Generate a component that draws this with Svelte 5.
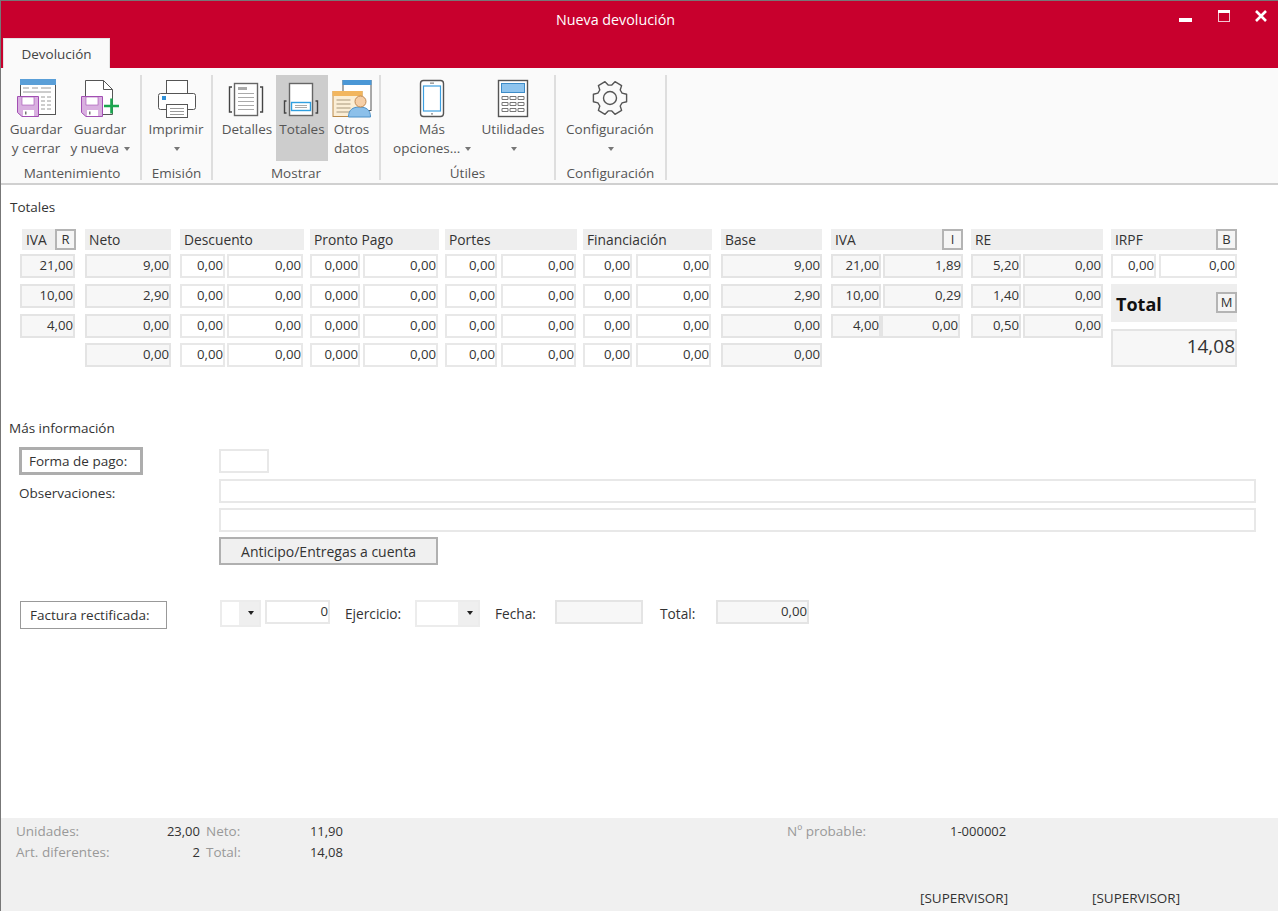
<script>
  const totalCols = [
    { key: 'iva', label: 'IVA', btn: 'R', ro: true, rows: [['21,00'], ['10,00'], ['4,00']] },
    { key: 'neto', label: 'Neto', ro: true, rows: [['9,00'], ['2,90'], ['0,00'], ['0,00']] },
    { key: 'desc', label: 'Descuento', rows: [['0,00', '0,00'], ['0,00', '0,00'], ['0,00', '0,00'], ['0,00', '0,00']] },
    { key: 'pronto', label: 'Pronto Pago', rows: [['0,000', '0,00'], ['0,000', '0,00'], ['0,000', '0,00'], ['0,000', '0,00']] },
    { key: 'portes', label: 'Portes', rows: [['0,00', '0,00'], ['0,00', '0,00'], ['0,00', '0,00'], ['0,00', '0,00']] },
    { key: 'fin', label: 'Financiación', rows: [['0,00', '0,00'], ['0,00', '0,00'], ['0,00', '0,00'], ['0,00', '0,00']] },
    { key: 'base', label: 'Base', ro: true, rows: [['9,00'], ['2,90'], ['0,00'], ['0,00']] },
    { key: 'iva2', label: 'IVA', btn: 'I', ro: true, rows: [['21,00', '1,89'], ['10,00', '0,29'], ['4,00', '0,00']] },
    { key: 're', label: 'RE', ro: true, rows: [['5,20', '0,00'], ['1,40', '0,00'], ['0,50', '0,00']] }
  ];

  // rueda dentada de seis dientes
  function gearPath(cx, cy) {
    const pts = [];
    for (let k = 0; k < 6; k++) {
      const a = k * 60;
      for (const [d, r] of [[-22, 13], [-13, 17], [13, 17], [22, 13]]) {
        const t = ((a + d) * Math.PI) / 180;
        pts.push((cx + r * Math.cos(t)).toFixed(1) + ' ' + (cy + r * Math.sin(t)).toFixed(1));
      }
    }
    return 'M' + pts.join('L') + 'Z';
  }
</script>

<div class="window">
  <header class="head">
    <div class="titlebar">
      <div class="title">Nueva devolución</div>
      <div class="controls">
        <svg width="108" height="37" viewBox="0 0 108 37">
          <rect x="9" y="17" width="13" height="4" fill="#fff" />
          <rect x="48.5" y="9.5" width="11" height="11" fill="none" stroke="#f3c6d2" />
          <rect x="48" y="9" width="12" height="3" fill="#fff" />
          <path d="M86 10l10 10M96 10l-10 10" stroke="#fff" stroke-width="2.6" />
        </svg>
      </div>
    </div>
    <div class="tabs">
      <div class="tab">Devolución</div>
    </div>
  </header>

  <nav class="ribbon">
    <section class="group g-mant">
      <div class="btns">
        <div class="rb w64">
          <svg width="44" height="42" viewBox="0 0 44 42">
            <rect x="6.5" y="2.5" width="35" height="35" fill="#fff" stroke="#555" />
            <rect x="6" y="2" width="36" height="6" fill="#5a9fd8" />
            <path d="M9 11h6M18 11h6M27 11h10M9 15h28M27 20h4M33 20h4M27 24h4M33 24h4M27 28h4M33 28h4M27 32h4M33 32h4" stroke="#9a9a9a" />
            <path d="M3.5 19.5h21v20H8l-4.500-4z" fill="#d9b0e0" stroke="#a24fb3" />
            <rect x="8" y="20" width="12" height="8" fill="#fff" stroke="#a24fb3" stroke-width=".6" />
            <rect x="9" y="33" width="11" height="6" fill="#fff" />
            <rect x="11" y="34.500" width="1.500" height="3" fill="#777" />
          </svg>
          <span>Guardar</span>
          <span>y cerrar</span>
        </div>
        <div class="rb w64">
          <svg width="44" height="42" viewBox="0 0 44 42">
            <path d="M7.500 3.500h18l9 9v25h-27z" fill="#fff" stroke="#555" />
            <path d="M25.500 3.500v9h9" fill="none" stroke="#555" />
            <path d="M3.500 19.500h21v20H8l-4.500-4z" fill="#d9b0e0" stroke="#a24fb3" />
            <rect x="8" y="20" width="12" height="8" fill="#fff" stroke="#a24fb3" stroke-width=".6" />
            <rect x="9" y="33" width="11" height="6" fill="#fff" />
            <rect x="11" y="34.500" width="1.500" height="3" fill="#777" />
            <path d="M26 29h15M33.500 21.500v15" stroke="#1ba64f" stroke-width="2.600" />
          </svg>
          <span>Guardar</span>
          <span>y nueva <i class="caret"></i></span>
        </div>
      </div>
      <div class="group-label">Mantenimiento</div>
    </section>

    <section class="group g-emi">
      <div class="btns">
        <div class="rb w68">
          <svg width="44" height="42" viewBox="0 0 44 42">
            <rect x="12.500" y="3.500" width="21" height="14" fill="#fff" stroke="#555" />
            <rect x="4.500" y="16.500" width="37" height="16" rx="2" fill="#fff" stroke="#555" />
            <rect x="8" y="19" width="4" height="4" fill="#2f8fd6" />
            <rect x="12.500" y="27.500" width="21" height="13" fill="#fff" stroke="#555" />
            <path d="M16 31.500h14M16 34.500h14M16 37.500h14" stroke="#999" />
          </svg>
          <span>Imprimir</span>
          <span><i class="caret"></i></span>
        </div>
      </div>
      <div class="group-label">Emisión</div>
    </section>

    <section class="group g-mostrar">
      <div class="btns">
        <div class="rb w58">
          <svg width="44" height="42" viewBox="1 0 44 42">
            <path d="M8 10H5.500v25H8M36 10h2.500v25H36" fill="none" stroke="#444" stroke-width="1.400" />
            <rect x="10.500" y="6.500" width="23" height="32" fill="#fff" stroke="#666" stroke-width="1.400" />
            <rect x="14" y="10" width="9" height="3" fill="#aaa" />
            <path d="M14 16.500h16M14 20.500h16M14 24.500h16M14 28.500h16M14 32.500h16" stroke="#aaa" />
          </svg>
          <span>Detalles</span>
        </div>
        <div class="rb w52 on">
          <svg width="44" height="42" viewBox="0 0 44 42">
            <rect x="9.500" y="6.500" width="23" height="32" fill="#fff" stroke="#666" stroke-width="1.400" />
            <path d="M6.500 24H4.500v12h2M35.500 24h2v12h-2" fill="none" stroke="#444" stroke-width="1.400" />
            <rect x="11.500" y="25.500" width="19" height="8" fill="#fff" stroke="#2f9fe0" stroke-width="1.400" />
            <path d="M15 28.500h12M15 30.500h12" stroke="#aaa" />
          </svg>
          <span>Totales</span>
        </div>
        <div class="rb w47">
          <svg width="44" height="42" viewBox="1.500 0 44 42">
            <rect x="14.500" y="3.500" width="28" height="30" fill="#fff" stroke="#555" />
            <rect x="14" y="3" width="29" height="5" fill="#4a97d6" />
            <rect x="4.500" y="14.500" width="29" height="25" fill="#fbeed6" stroke="#b98a4a" />
            <rect x="4" y="14" width="30" height="5" fill="#f2b65f" />
            <path d="M8 23h14M8 27h14M8 31h14M8 35h14" stroke="#a8987c" />
            <path d="M20 40c0-7 4-10 11-10s11 3 11 10z" fill="#8cc0ea" stroke="#4a90c8" />
            <circle cx="32" cy="24.500" r="5.500" fill="#f6cfa8" stroke="#c08a55" />
          </svg>
          <span>Otros</span>
          <span>datos</span>
        </div>
      </div>
      <div class="group-label">Mostrar</div>
    </section>

    <section class="group g-utiles">
      <div class="btns">
        <div class="rb w94">
          <svg width="44" height="42" viewBox="0 0 44 42">
            <rect x="10.500" y="3.500" width="23" height="36" rx="3" fill="#fff" stroke="#555" stroke-width="1.400" />
            <rect x="13.500" y="9" width="17" height="25" fill="#fff" stroke="#3d9fe0" stroke-width="1.200" />
            <path d="M20 6.200h4M21 36.800h2" stroke="#888" stroke-width="1.200" />
          </svg>
          <span>Más</span>
          <span>opciones... <i class="caret"></i></span>
        </div>
        <div class="rb w68">
          <svg width="44" height="42" viewBox="0 0 44 42">
            <rect x="7.500" y="3.500" width="29" height="36" fill="#fff" stroke="#555" stroke-width="1.400" />
            <rect x="10.500" y="6.500" width="23" height="9" fill="#8ec4ee" stroke="#3d8cc8" />
            <path d="M11 19.500h6v3h-6zM19 19.500h6v3h-6zM27 19.500h6v3h-6zM11 25.500h6v3h-6zM19 25.500h6v3h-6zM27 25.500h6v3h-6zM11 31.500h6v3h-6zM19 31.500h6v3h-6zM27 31.500h6v3h-6z" fill="none" stroke="#777" />
          </svg>
          <span>Utilidades</span>
          <span><i class="caret"></i></span>
        </div>
      </div>
      <div class="group-label">Útiles</div>
    </section>

    <section class="group g-conf">
      <div class="btns">
        <div class="rb w108">
          <svg width="44" height="42" viewBox="0 0 44 42">
            <path d={gearPath(22, 21)} fill="none" stroke="#555" stroke-width="1.400" stroke-linejoin="round" />
            <circle cx="22" cy="21" r="6.500" fill="none" stroke="#555" stroke-width="1.400" />
          </svg>
          <span>Configuración</span>
          <span><i class="caret"></i></span>
        </div>
      </div>
      <div class="group-label">Configuración</div>
    </section>
  </nav>

  <main class="content">
    <div class="section-title">Totales</div>

    <div class="totals">
      {#each totalCols as col}
        <div class="col {col.key}">
          <div class="col-head">
            <span>{col.label}</span>
            {#if col.btn}<b class="mini">{col.btn}</b>{/if}
          </div>
          {#each col.rows as row}
            <div class="row">
              {#each row as v, i}
                <div class="cell" class:ro={col.ro} class:a={i === 0} class:b={i === 1}>{v}</div>
              {/each}
            </div>
          {/each}
        </div>
      {/each}

      <div class="col irpf">
        <div class="col-head">
          <span>IRPF</span>
          <b class="mini">B</b>
        </div>
        <div class="row">
          <div class="cell a">0,00</div>
          <div class="cell b">0,00</div>
        </div>
        <div class="total-head">
          <span>Total</span>
          <b class="mini">M</b>
        </div>
        <div class="total-value">14,08</div>
      </div>
    </div>

    <div class="section-title more">Más información</div>

    <div class="info">
      <div class="form-row first">
        <div class="lead"><button class="link-btn">Forma de pago:</button></div>
        <div class="cell pay"></div>
      </div>
      <div class="form-row obs">
        <div class="lead"><span class="obs-label">Observaciones:</span></div>
        <div class="cell wide"></div>
      </div>
      <div class="form-row second">
        <div class="lead"></div>
        <div class="cell wide"></div>
      </div>
      <div class="form-row adv">
        <div class="lead"></div>
        <button class="plain-btn">Anticipo/Entregas a cuenta</button>
      </div>
      <div class="form-row fact">
        <div class="lead"><button class="link-btn">Factura rectificada:</button></div>
        <div class="select s1"><i class="arrow"></i></div>
        <div class="cell num">0</div>
        <span class="lbl l-ej">Ejercicio:</span>
        <div class="select s2"><i class="arrow"></i></div>
        <span class="lbl l-fe">Fecha:</span>
        <div class="cell ro fecha"></div>
        <span class="lbl l-to">Total:</span>
        <div class="cell ro tot">0,00</div>
      </div>
    </div>
  </main>

  <footer class="foot">
    <div class="foot-row">
      <div class="f1"><span class="muted">Unidades:</span><span class="val">23,00</span></div>
      <div class="f2"><span class="muted">Neto:</span><span class="val">11,90</span></div>
      <span class="muted f3">Nº probable:</span>
      <span class="val">1-000002</span>
    </div>
    <div class="foot-row">
      <div class="f1"><span class="muted">Art. diferentes:</span><span class="val">2</span></div>
      <div class="f2"><span class="muted">Total:</span><span class="val">14,08</span></div>
    </div>
    <div class="foot-status">
      <span class="user">[SUPERVISOR]</span>
      <span>[SUPERVISOR]</span>
    </div>
  </footer>
</div>

<style>
  :global(body) {
    margin: 0;
    overflow: hidden;
  }

  .window {
    box-sizing: border-box;
    display: flex;
    flex-direction: column;
    width: 1278px;
    height: 911px;
    border-top: 1px solid #777;
    border-left: 1px solid #777;
    background: #fff;
    font-family: "Open Sans", "Noto Sans", sans-serif;
    font-size: 13.5px;
    color: #333;
  }

  /* cabecera roja */
  .head {
    background: #c8002d;
    height: 67px;
    flex: none;
  }

  .titlebar {
    display: flex;
    height: 37px;
  }

  .title {
    flex: 1;
    padding-left: 60px;
    text-align: center;
    line-height: 37px;
    font-size: 14.300px;
    color: #fff;
  }

  .controls {
    width: 108px;
  }

  .tabs {
    display: flex;
    height: 30px;
    padding-left: 2px;
  }

  .tab {
    width: 107px;
    text-align: center;
    line-height: 30px;
    background: #fafafa;
    border: 1px solid #e4e4e4;
    border-bottom: 0;
    box-sizing: border-box;
    font-weight: 500;
    font-size: 13.500px;
    color: #444;
  }

  /* cinta */
  .ribbon {
    display: flex;
    flex: none;
    height: 117px;
    padding: 7px 0 0 3px;
    box-sizing: border-box;
    background: #fafafa;
    border-bottom: 2px solid #d0d0d0;
  }

  .group {
    box-sizing: border-box;
    display: flex;
    flex-direction: column;
    height: 105px;
    border-right: 2px solid #dedede;
  }

  .g-mant { width: 138px; }
  .g-emi { width: 71px; }
  .g-mostrar { width: 168px; }
  .g-utiles { width: 175px; }
  .g-conf { width: 111px; }

  .g-mostrar .btns { padding-left: 5px; }
  .g-utiles .btns { padding-left: 4px; }

  .btns {
    display: flex;
    height: 86px;
  }

  .rb {
    display: flex;
    flex-direction: column;
    align-items: center;
    box-sizing: border-box;
    height: 86px;
    padding-top: 2px;
    color: #555;
    line-height: 19px;
    white-space: nowrap;
  }

  .rb svg {
    margin-bottom: 1px;
    flex: none;
  }

  .rb span {
    height: 19px;
  }

  .w47 { width: 47px; }
  .w52 { width: 52px; }
  .w58 { width: 58px; }
  .w64 { width: 64px; }
  .w68 { width: 68px; }
  .w94 { width: 94px; }
  .w108 { width: 108px; }

  .on {
    background: #cdcdcd;
  }

  .caret {
    display: inline-block;
    vertical-align: middle;
    width: 0;
    height: 0;
    margin-left: 1px;
    border-left: 3.500px solid transparent;
    border-right: 3.500px solid transparent;
    border-top: 4px solid #777;
  }

  .group-label {
    margin-top: 3px;
    text-align: center;
    line-height: 18px;
    color: #555;
  }

  /* contenido */
  .content {
    flex: 1;
  }

  .section-title {
    margin: 13px 0 0 9px;
    line-height: 18px;
  }

  .section-title.more {
    margin: 46px 0 0 8px;
  }

  .totals {
    display: flex;
    align-items: flex-start;
    margin-top: 13px;
    padding-left: 19px;
  }

  .col {
    flex: none;
  }

  .col-head {
    display: flex;
    align-items: center;
    justify-content: space-between;
    box-sizing: border-box;
    height: 21px;
    margin-bottom: 4px;
    padding-left: 4px;
    background: #eeeeee;
    font-size: 13.800px;
  }

  .mini {
    box-sizing: border-box;
    width: 21px;
    height: 21px;
    border: 2px solid #b4b4b4;
    background: #f5f5f5;
    font-weight: 400;
    font-size: 13px;
    line-height: 16px;
    text-align: center;
  }

  .row {
    display: flex;
    height: 24px;
    margin-bottom: 6px;
  }

  .row:nth-child(4) {
    margin-bottom: 5px;
  }

  .cell {
    box-sizing: border-box;
    height: 24px;
    border: 2px solid #e8e8e8;
    background: #fff;
    text-align: right;
    line-height: 19px;
    font-size: 13.200px;
  }

  .cell.ro {
    background: #f7f7f7;
    border-color: #e4e4e4;
  }

  .iva { width: 56px; }
  .iva .col-head { margin-left: 2px; }
  .iva .cell { width: 55px; }
  .neto { width: 86px; margin-left: 9px; }
  .neto .cell, .base .cell { width: 100%; }

  .desc { width: 124px; margin-left: 9px; }
  .desc .row { gap: 2px; }
  .desc .a { width: 45px; }
  .desc .b { width: 76px; }

  .pronto { width: 129px; margin-left: 6px; }
  .pronto .row { gap: 3px; }
  .pronto .a { width: 50px; }
  .pronto .b { width: 75px; }

  .portes { width: 132px; margin-left: 6px; }
  .portes .row { gap: 4px; }
  .portes .a { width: 52px; }
  .portes .b { width: 75px; }

  .fin { width: 129px; margin-left: 6px; }
  .fin .row { gap: 4px; }
  .fin .a { width: 49px; }
  .fin .b { width: 75px; }

  .base { width: 101px; margin-left: 9px; }

  .iva2 { width: 132px; margin-left: 9px; }
  .iva2 .row { gap: 2px; }
  .iva2 .a { width: 50px; }
  .iva2 .b { width: 80px; }
  .iva2 .row:nth-child(4) { gap: 0; }
  .iva2 .row:nth-child(4) .b { width: 79px; }

  .re { width: 132px; margin-left: 8px; }
  .re .row { gap: 2px; }
  .re .a { width: 50px; }
  .re .b { width: 80px; }

  .irpf { width: 126px; margin-left: 8px; }
  .irpf .row { gap: 3px; }
  .irpf .a { width: 45px; }
  .irpf .b { width: 78px; }

  .total-head {
    display: flex;
    align-items: center;
    justify-content: space-between;
    box-sizing: border-box;
    height: 38px;
    padding-left: 5px;
    background: #eeeeee;
    font-weight: 700;
    font-size: 18px;
    color: #111;
  }

  .total-head span {
    margin-top: 2px;
  }

  .total-head .mini {
    margin-top: -2px;
    color: #333;
  }

  .total-value {
    box-sizing: border-box;
    height: 38px;
    margin-top: 7px;
    border: 2px solid #e4e4e4;
    background: #f7f7f7;
    text-align: right;
    line-height: 31px;
    font-size: 19px;
  }

  /* mas informacion */
  .info {
    margin-top: 10px;
    padding: 0 22px 0 18px;
  }

  .form-row {
    display: flex;
    align-items: center;
  }

  .lead {
    flex: none;
    width: 200px;
  }

  .first { height: 28px; }
  .obs { align-items: flex-start; height: 24px; margin-top: 4px; }
  .second { margin-top: 5px; }
  .adv { margin-top: 5px; }
  .fact { align-items: flex-start; margin-top: 35px; height: 29px; }

  .obs-label {
    line-height: 28px;
  }

  .cell.wide {
    flex: 1;
  }

  .cell.pay {
    width: 50px;
  }

  .link-btn {
    box-sizing: border-box;
    width: 124px;
    height: 28px;
    padding: 0 0 0 7px;
    border: 3px solid #adadad;
    background: #fff;
    font: inherit;
    color: #333;
    text-align: left;
  }

  .fact .link-btn {
    width: 147px;
    margin: 1px 0 0 1px;
    padding-left: 9px;
    border-width: 1px;
    border-color: #999;
  }

  .plain-btn {
    box-sizing: border-box;
    width: 219px;
    height: 28px;
    padding: 0;
    border: 2px solid #b0b0b0;
    background: #f0f0f0;
    font: inherit;
    font-size: 14px;
    color: #333;
  }

  .select {
    position: relative;
    box-sizing: border-box;
    height: 27px;
    border: 2px solid #ececec;
    background: linear-gradient(to left, #efefef 20px, #fff 20px);
  }

  .s1 { width: 41px; margin-left: 1px; }
  .s2 { width: 65px; }

  .arrow {
    position: absolute;
    right: 5px;
    top: 9px;
    width: 0;
    height: 0;
    border-left: 3.500px solid transparent;
    border-right: 3.500px solid transparent;
    border-top: 4px solid #222;
  }

  .cell.num {
    width: 65px;
    margin-left: 4px;
  }

  .lbl {
    line-height: 27px;
    font-size: 13.700px;
  }

  .l-ej { width: 70px; margin-left: 15px; }
  .l-fe { width: 60px; margin-left: 15px; }
  .l-to { width: 56px; margin-left: 17px; }

  .fecha { width: 88px; }
  .tot { width: 93px; }

  /* pie */
  .foot {
    flex: none;
    box-sizing: border-box;
    height: 93px;
    padding: 3px 0 0 15px;
    background: #f0f0f0;
    font-size: 13.500px;
  }

  .foot-row {
    display: flex;
    height: 21px;
    line-height: 21px;
  }

  .muted {
    color: #999;
  }

  .val {
    font-size: 13px;
  }

  .f1, .f2 {
    display: flex;
    justify-content: space-between;
  }

  .f1 { width: 184px; }
  .f2 { width: 137px; margin-left: 6px; }
  .f3 { width: 163px; margin-left: 444px; }

  .foot-status {
    display: flex;
    margin-top: 26px;
    padding-left: 904px;
    line-height: 18px;
  }

  .user {
    width: 172px;
  }
</style>
